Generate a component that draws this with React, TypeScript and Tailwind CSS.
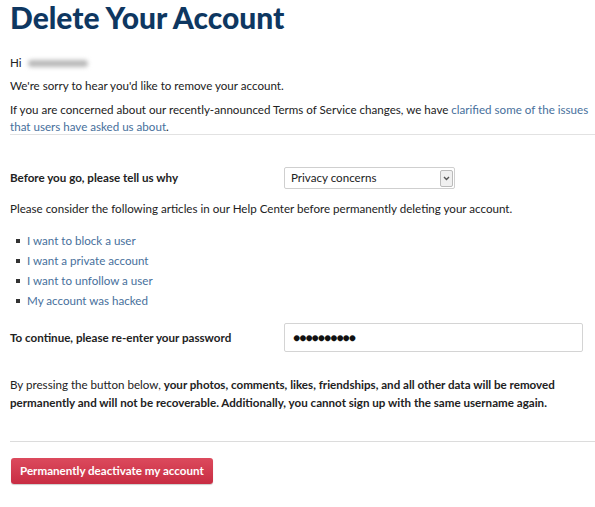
import React from "react";

export default function App() {
  const links = [
    "I want to block a user",
    "I want a private account",
    "I want to unfollow a user",
    "My account was hacked",
  ];
  return (
    <div className="w-[595px] h-[507px] overflow-hidden bg-white font-['Lato',sans-serif] text-[11.6px] text-[#222]">
      <div className="pl-[10px]">
        <h1 className="text-[30px] leading-[32px] font-black text-[#0e3761] pt-[1px]">
          Delete Your Account
        </h1>
        <div className="mt-[22px] flex items-center h-[16px]">
          <span>Hi</span>
          <span className="ml-[6px] inline-block w-[60px] h-[7px] rounded-full bg-[#b9b9b9] blur-[2px]" />
        </div>
        <p className="mt-[7px] leading-[16px]">We're sorry to hear you'd like to remove your account.</p>
        <p className="mt-[7px] leading-[17px] pr-[4px]">
          If you are concerned about our recently-announced Terms of Service changes, we have{" "}
          <a className="text-[#47709c]">clarified some of the issues that users have asked us about</a>.
        </p>
        <div className="mt-[-1px] border-t border-[#e2e2e2]" />

        <div className="mt-[32px] flex items-center h-[22px]">
          <div className="w-[274px] font-bold">Before you go, please tell us why</div>
          <div className="w-[171px] h-[22px] border border-[#cfcfcf] rounded-[2px] flex items-center justify-between pl-[6px] pr-[1px]">
            <span>Privacy concerns</span>
            <span className="w-[13px] h-[17px] border border-[#bbb] bg-[#f0f0f0] rounded-[2px] flex items-center justify-center">
              <svg width="7" height="5" viewBox="0 0 7 5">
                <path d="M1 1 L3.5 3.5 L6 1" stroke="#555" strokeWidth="1.4" fill="none" />
              </svg>
            </span>
          </div>
        </div>
        <p className="mt-[12px] leading-[16px]">
          Please consider the following articles in our Help Center before permanently deleting your account.
        </p>
        <ul className="mt-[16px] flex flex-col gap-[4px] pl-[6px]">
          {links.map((l) => (
            <li key={l} className="flex items-center h-[16px]">
              <span className="w-[4px] h-[4px] bg-[#333] mr-[7px]" />
              <a className="text-[#47709c]">{l}</a>
            </li>
          ))}
        </ul>
        <div className="mt-[14px] flex items-center h-[29px]">
          <div className="w-[274px] font-bold">To continue, please re-enter your password</div>
          <div className="w-[299px] h-[29px] border border-[#d4d4d4] rounded-[2px] flex items-center pl-[8px] text-[#111] text-[12px] tracking-[-1px]">
            ●●●●●●●●●●
          </div>
        </div>
        <p className="mt-[24px] leading-[18px] pr-[10px]">
          By pressing the button below,{" "}
          <b>
            your photos, comments, likes, friendships, and all other data will be removed permanently and will not
            be recoverable. Additionally, you cannot sign up with the same username again.
          </b>
        </p>
        <div className="mt-[29px] border-t border-[#dcdcdc]" />
        <button className="mt-[16px] ml-[1px] h-[26px] px-[9px] rounded-[3px] bg-gradient-to-b from-[#dc4a5d] to-[#c82c43] text-white font-bold text-[11.6px] shadow-[0_1px_1px_rgba(0,0,0,0.2)]">
          Permanently deactivate my account
        </button>
      </div>
    </div>
  );
}
